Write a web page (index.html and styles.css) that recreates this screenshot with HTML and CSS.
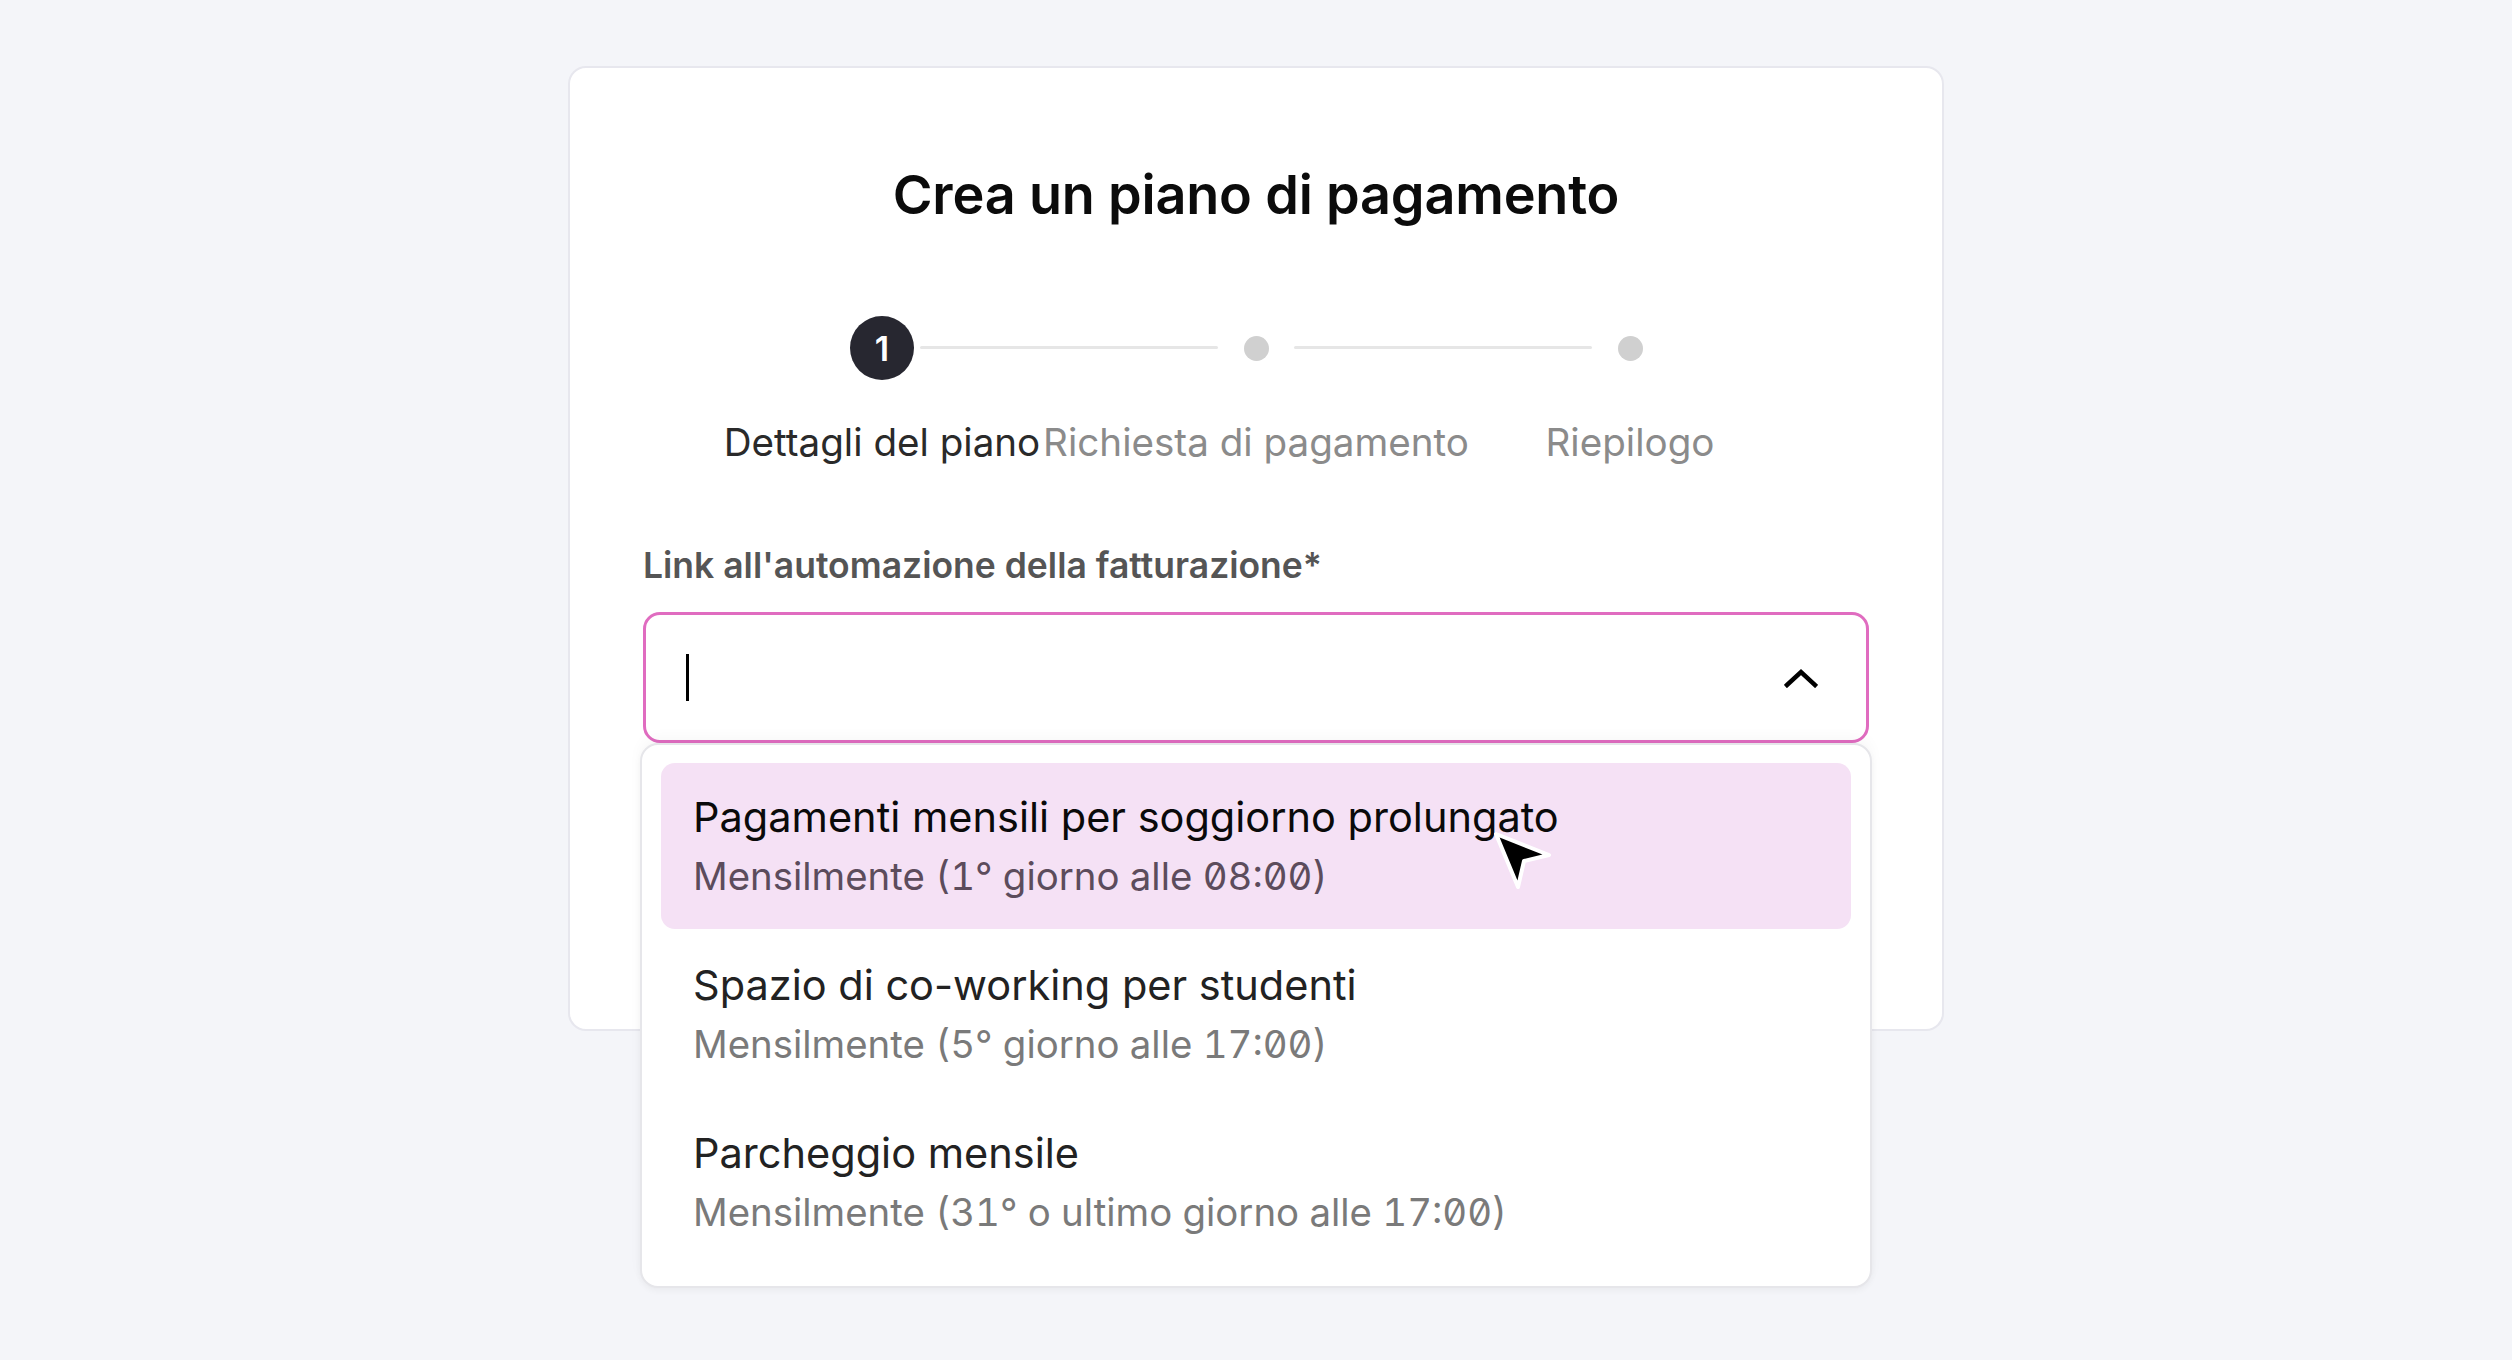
FILE: index.html
```html
<!DOCTYPE html>
<html lang="it">
<head>
  <meta charset="UTF-8">
  <title>Crea un piano di pagamento</title>
  <link rel="stylesheet" href="styles.css">
</head>
<body>
  <div class="page">
    <div class="card">
      <h1 class="card-title">Crea un piano di pagamento</h1>

      <!-- Stepper -->
      <div class="stepper">
        <div class="step active">
          <div class="marker"><span class="num">1</span></div>
          <div class="step-label">Dettagli del piano</div>
        </div>
        <div class="step">
          <div class="marker"><span class="dot"></span></div>
          <div class="step-label">Richiesta di pagamento</div>
        </div>
        <div class="step">
          <div class="marker"><span class="dot"></span></div>
          <div class="step-label">Riepilogo</div>
        </div>
      </div>

      <div class="field">
        <label class="field-label">Link all'automazione della fatturazione*</label>
        <div class="combo">
          <div class="combo-input">
            <span class="caret"></span>
            <svg class="chevron" width="34" height="20" viewBox="0 0 34 20">
              <path d="M3 17 L17 4 L31 17" fill="none" stroke="#000" stroke-width="4.5" stroke-linecap="square"/>
            </svg>
          </div>

          <!-- Menu aperto -->
          <div class="menu">
            <div class="option hover">
              <div class="option-title">Pagamenti mensili per soggiorno prolungato</div>
              <div class="option-sub">Mensilmente (1° giorno alle 08:00)</div>
              <svg class="pointer" width="60" height="60" viewBox="0 0 60 60">
                <path d="M3 3 L56 24 L31 30 L25 56 Z" fill="#000" stroke="#fff" stroke-width="4" stroke-linejoin="round"/>
              </svg>
            </div>
            <div class="option">
              <div class="option-title">Spazio di co-working per studenti</div>
              <div class="option-sub">Mensilmente (5° giorno alle 17:00)</div>
            </div>
            <div class="option">
              <div class="option-title">Parcheggio mensile</div>
              <div class="option-sub">Mensilmente (31° o ultimo giorno alle 17:00)</div>
            </div>
          </div>
        </div>
      </div>
    </div>
  </div>
</body>
</html>
```

FILE: styles.css
```css
html, body {
  margin: 0;
  padding: 0;
  background: #f4f5f9;
  font-family: Inter, 'Noto Sans', sans-serif;
  color: #111;
}

.page {
  display: flex;
  justify-content: center;
  padding-top: 66px;
  height: 1360px;
  box-sizing: border-box;
}

.card {
  width: 1376px;
  height: 965px;
  box-sizing: border-box;
  background: #fff;
  border: 2px solid #e7e7ee;
  border-radius: 18px;
  padding: 95px 73px 0;
}

.card-title {
  margin: 0;
  text-align: center;
  font-size: 54px;
  font-weight: 600;
  line-height: 64px;
  color: #0b0b0b;
  letter-spacing: -0.2px;
}

.stepper {
  display: grid;
  grid-template-columns: repeat(3, 374px);
  justify-content: center;
  margin-top: 89px;
}

.step {
  position: relative;
  display: flex;
  flex-direction: column;
  align-items: center;
}

.step:not(:last-child)::after {
  content: "";
  position: absolute;
  top: 30px;
  left: calc(50% + 38px);
  width: calc(100% - 76px);
  height: 3px;
  background: #e6e6e6;
  border-radius: 2px;
}

.marker {
  height: 64px;
  display: flex;
  align-items: center;
  justify-content: center;
}

.num {
  width: 64px;
  height: 64px;
  border-radius: 50%;
  background: #272730;
  color: #fff;
  font-size: 34px;
  font-weight: 600;
  display: flex;
  align-items: center;
  justify-content: center;
}

.dot {
  width: 25px;
  height: 25px;
  border-radius: 50%;
  background: #d0d0d0;
}

.step-label {
  margin-top: 40px;
  font-size: 38.6px;
  line-height: 44px;
  color: #8b8b8b;
  white-space: nowrap;
}

.step.active .step-label {
  color: #2a2a2a;
}

.field {
  margin-top: 81px;
}

.field-label {
  display: block;
  font-size: 35.5px;
  font-weight: 600;
  line-height: 42px;
  color: #555;
}

.combo {
  position: relative;
  margin-top: 25px;
}

.combo-input {
  height: 131px;
  box-sizing: border-box;
  border: 3px solid #e06cc0;
  border-radius: 17px;
  display: flex;
  align-items: center;
  justify-content: space-between;
  padding: 0 48px 0 40px;
}

.caret {
  width: 3px;
  height: 47px;
  background: #000;
}

.chevron {
  display: block;
}

.menu {
  position: absolute;
  top: 100%;
  left: -3px;
  right: -3px;
  height: 545px;
  box-sizing: border-box;
  background: #fff;
  border: 2px solid #e6e6ea;
  border-radius: 18px;
  box-shadow: 0 -6px 14px rgba(0, 0, 0, 0.03), 0 3px 6px rgba(0, 0, 0, 0.04);
  padding: 18px 19px;
  display: flex;
  flex-direction: column;
  gap: 2px;
  z-index: 2;
}

.option {
  position: relative;
  height: 166px;
  box-sizing: border-box;
  border-radius: 14px;
  padding: 0 32px;
  display: flex;
  flex-direction: column;
  justify-content: center;
  gap: 3px;
}

.option.hover {
  background: #f5e1f5;
}

.option-title {
  font-size: 41.5px;
  line-height: 56px;
  color: #222;
}

.option.hover .option-title {
  color: #0a0a0a;
}

.option-sub {
  font-size: 38.4px;
  line-height: 56px;
  color: #7a7a7a;
  font-feature-settings: "tnum", "zero";
}

.option.hover .option-sub {
  color: #5c4c5c;
}

.pointer {
  position: absolute;
  left: 832px;
  top: 68px;
}
```
